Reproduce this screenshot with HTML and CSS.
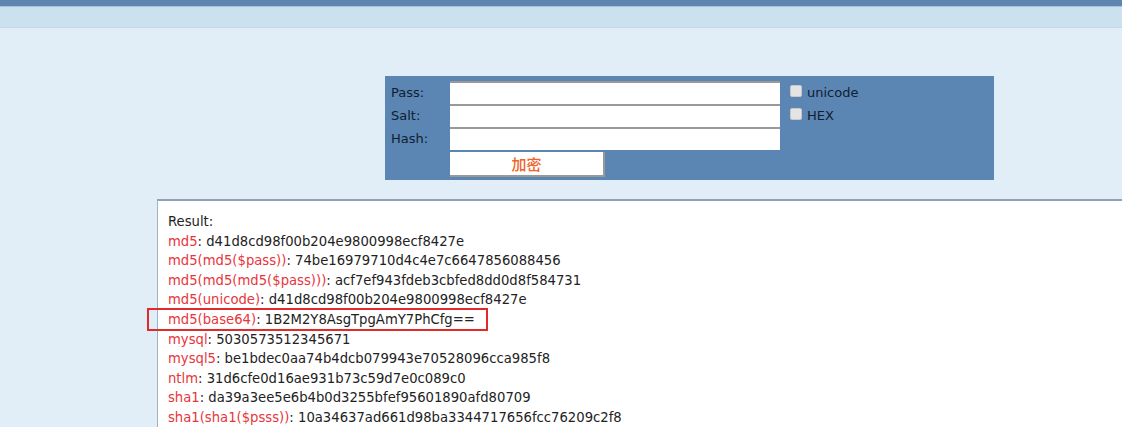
FILE: index.html
```html
<!DOCTYPE html>
<html lang="en">
<head>
  <meta charset="UTF-8" />
  <title>Hash</title>
  <link rel="stylesheet" href="styles.css">
</head>
<body>

  <div id="topBar"></div>
  <div id="subBar"></div>

  <form class="hash-form">
    <div class="fields">
      <label>Pass:</label>
      <input type="text" />
      <label>Salt:</label>
      <input type="text" />
      <label>Hash:</label>
      <input type="text" />
      <span></span>
      <button type="button">加密</button>
    </div>
    <div class="options">
      <label><input type="checkbox" /> unicode</label>
      <label><input type="checkbox" /> HEX</label>
    </div>
  </form>

  <div class="result">
    <div>Result:</div>
    <div><span class="k">md5</span>: d41d8cd98f00b204e9800998ecf8427e</div>
    <div><span class="k">md5(md5($pass))</span>: 74be16979710d4c4e7c6647856088456</div>
    <div><span class="k">md5(md5(md5($pass)))</span>: acf7ef943fdeb3cbfed8dd0d8f584731</div>
    <div><span class="k">md5(unicode)</span>: d41d8cd98f00b204e9800998ecf8427e</div>
    <div class="mark"><span class="k">md5(base64)</span>: 1B2M2Y8AsgTpgAmY7PhCfg==</div>
    <div><span class="k">mysql</span>: 5030573512345671</div>
    <div><span class="k">mysql5</span>: be1bdec0aa74b4dcb079943e70528096cca985f8</div>
    <div><span class="k">ntlm</span>: 31d6cfe0d16ae931b73c59d7e0c089c0</div>
    <div><span class="k">sha1</span>: da39a3ee5e6b4b0d3255bfef95601890afd80709</div>
    <div><span class="k">sha1(sha1($psss))</span>: 10a34637ad661d98ba3344717656fcc76209c2f8</div>
  </div>

</body>
</html>
```

FILE: styles.css
```css
* {
  box-sizing: border-box;
}

body {
  margin: 0;
  background: #e1eef7;
  font-family: "DejaVu Sans", Verdana, sans-serif;
  font-size: 12px;
  color: #222;
  overflow: hidden;
}

#topBar {
  height: 7px;
  background: #5e85b0;
  border-bottom: 1px solid #a9c3dc;
}

#subBar {
  height: 21px;
  background: #cbe1f0;
  border-bottom: 1px solid #c4d9e8;
}

.hash-form {
  display: flex;
  width: 609px;
  height: 104px;
  margin: 48px 0 0 385px;
  padding: 5px 0 0 6px;
  background: #5b86b3;
}

.fields {
  display: grid;
  grid-template-columns: 59px 330px;
  grid-auto-rows: 23px;
  align-items: center;
}

.fields label {
  color: #102030;
  font-size: 13px;
}

.fields input {
  height: 23px;
  border: none;
  border-top: 2px solid #999;
  background: #fff;
}

.fields button {
  width: 155px;
  height: 25px;
  margin-top: 2px;
  align-self: start;
  border: none;
  border-right: 2px solid #999;
  border-bottom: 2px solid #999;
  background: #fff;
  color: #f0622a;
  font-family: "Noto Sans CJK SC", sans-serif;
  font-size: 15px;
  font-weight: 500;
}

.options {
  display: flex;
  flex-direction: column;
  margin-left: 10px;
}

.options label {
  display: flex;
  align-items: center;
  height: 23px;
  color: #102030;
  font-size: 13px;
}

.options input {
  appearance: none;
  width: 12px;
  height: 12px;
  margin: -4px 5px 0 0;
  border: 1px solid #c8c8c8;
  border-radius: 2px;
  background: #e4e4e4;
}

.result {
  margin: 19px 0 0 157px;
  padding: 11px 10px 0;
  height: 240px;
  background: #fff;
  border-top: 2px solid #8da2b6;
  border-left: 1px solid #9fb3c6;
  line-height: 19.6px;
  font-size: 13.2px;
}

.result .k {
  color: #e8353a;
}

.mark {
  width: 341px;
  height: 23px;
  margin: -2px 0 -1.4px -21px;
  padding-left: 19px;
  border: 2px solid #e22a2a;
  line-height: 19px;
}
```
